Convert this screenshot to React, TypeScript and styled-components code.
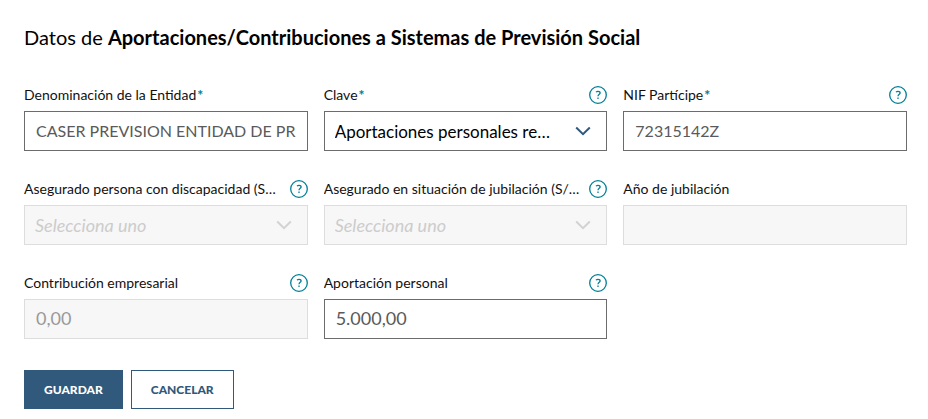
import React from 'react';
import styled, { createGlobalStyle, css } from 'styled-components';

const Global = createGlobalStyle`
  *, *::before, *::after { box-sizing: border-box; }
  body { margin: 0; background: #fff; color: #111; font-family: Lato, sans-serif; }
`;

const Form = styled.form`
  padding: 23px 21px 8px 24px;
`;

const Title = styled.h1`
  margin: 0 0 33px;
  font-size: 20px;
  line-height: 28px;
  font-weight: 400;
  color: #000;
`;

const Fields = styled.div`
  display: grid;
  grid-template-columns: repeat(3, minmax(0, 1fr));
  gap: 27px 16px;
`;

const Cell = styled.div`
  min-width: 0;
`;

const Heading = styled.div`
  display: flex;
  align-items: center;
  justify-content: space-between;
  gap: 6px;
  height: 22px;
  margin-bottom: 5px;
`;

const Label = styled.label`
  min-width: 0;
  font-size: 14px;
  line-height: 20px;
  white-space: nowrap;
  overflow: hidden;
  text-overflow: ellipsis;
`;

const Required = styled.span`
  margin-left: 1px;
  font-weight: 900;
  color: #007f96;
`;

const HelpButton = styled.button`
  display: flex;
  flex: none;
  padding: 0;
  border: 0;
  background: none;
  color: #007f96;
`;

const control = css`
  display: block;
  width: 100%;
  height: 40px;
  margin: 0;
  border: 1px solid #6c6c6c;
  border-radius: 0;
  background: #fff;
  font-family: inherit;
  font-size: 17px;
  &:disabled {
    border-color: #ddd;
    background: #f7f7f7;
    opacity: 1;
  }
`;

const Input = styled.input<{ $amount?: boolean }>`
  ${control}
  padding: 0 11px 2px;
  color: #5a5a5a;
  font-size: ${p => (p.$amount ? 18 : 16)}px;
  &:disabled { color: #999; }
`;

const SelectFrame = styled.div`
  display: grid;
  align-items: center;
  > * { grid-area: 1 / 1; }
`;

const Select = styled.select`
  ${control}
  appearance: none;
  padding: 0 52px 0 10px;
  color: #000;
  text-overflow: ellipsis;
  &:disabled {
    font-size: 18px;
    font-style: italic;
    color: #ccc;
  }
`;

const Chevron = styled.svg<{ $muted?: boolean }>`
  justify-self: end;
  margin-right: 16px;
  pointer-events: none;
  color: ${p => (p.$muted ? '#d2d2d2' : '#30597b')};
`;

const Actions = styled.div`
  display: flex;
  gap: 8px;
  margin-top: 31px;
`;

const Button = styled.button<{ $primary?: boolean }>`
  height: 39px;
  padding: 0 19px;
  border: 1px solid #30597b;
  background: ${p => (p.$primary ? '#30597b' : '#fff')};
  color: ${p => (p.$primary ? '#fff' : '#30597b')};
  font-family: inherit;
  font-size: 12px;
  font-weight: 900;
`;

type FieldProps = {
  id: string;
  label: string;
  value: string;
  required?: boolean;
  help?: boolean;
  disabled?: boolean;
  select?: boolean;
  amount?: boolean;
};

function Field({ id, label, value, required, help, disabled, select, amount }: FieldProps) {
  return (
    <Cell>
      <Heading>
        <Label htmlFor={id}>{label}{required && <Required>*</Required>}</Label>
        {help && (
          <HelpButton type="button" aria-label={`Ayuda: ${label}`}>
            <svg width="18" height="18" viewBox="0 0 18 18" fill="none" stroke="currentColor" strokeWidth="1.3">
              <circle cx="9" cy="9" r="8.3" />
              <path d="M7 6.1Q7.8 5.3 9 5.3c1.3 0 2.1.7 2.1 1.7C11.1 8.3 9 8.4 9 10.3" />
              <path d="M9 11.6v1.5" />
            </svg>
          </HelpButton>
        )}
      </Heading>
      {select ? (
        <SelectFrame>
          <Select id={id} disabled={disabled} required={required} defaultValue={value}>
            <option>{value}</option>
          </Select>
          <Chevron $muted={disabled} width="16" height="10" viewBox="0 0 16 10" fill="none" stroke="currentColor" strokeWidth="2">
            <path d="M1.2 1.5 8 8.2l6.8-6.7" />
          </Chevron>
        </SelectFrame>
      ) : (
        <Input id={id} $amount={amount} disabled={disabled} required={required} defaultValue={value} />
      )}
    </Cell>
  );
}

export default function App() {
  return (
    <>
      <Global />
      <Form>
        <Title>Datos de <b>Aportaciones/Contribuciones a Sistemas de Previsión Social</b></Title>
        <Fields>
          <Field id="entidad" label="Denominación de la Entidad" value="CASER PREVISION ENTIDAD DE PREVISION SOCIAL" required />
          <Field id="clave" label="Clave" value="Aportaciones personales realizadas" required help select />
          <Field id="nif" label="NIF Partícipe" value="72315142Z" required help />
          <Field id="discapacidad" label="Asegurado persona con discapacidad (S…" value="Selecciona uno" help disabled select />
          <Field id="situacion" label="Asegurado en situación de jubilación (S/…" value="Selecciona uno" help disabled select />
          <Field id="ano" label="Año de jubilación" value="" disabled />
          <Field id="contribucion" label="Contribución empresarial" value="0,00" help disabled amount />
          <Field id="aportacion" label="Aportación personal" value="5.000,00" help amount />
        </Fields>
        <Actions>
          <Button type="button" $primary>GUARDAR</Button>
          <Button type="button">CANCELAR</Button>
        </Actions>
      </Form>
    </>
  );
}
